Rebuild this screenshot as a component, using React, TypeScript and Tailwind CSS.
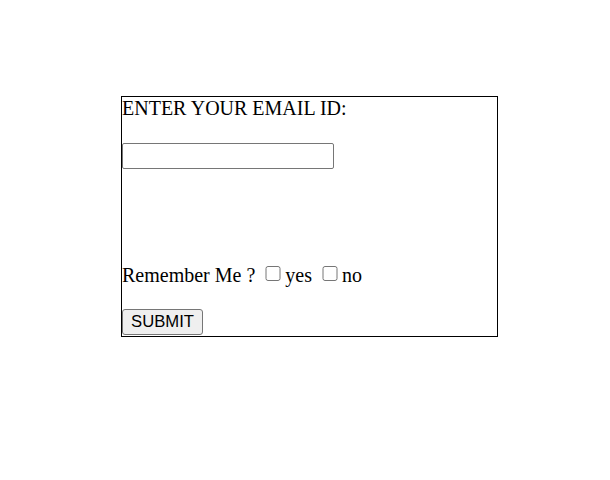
import React from "react";

export default function App() {
  return (
    <div className="w-[610px] h-[480px] bg-white pt-[96px] pl-[121px]">
      <div className="w-[377px] h-[241px] border border-black flex flex-col items-start font-['Liberation_Serif',serif] text-[20px] text-black">
        <div className="h-[22px] leading-[22px] whitespace-nowrap">ENTER YOUR EMAIL ID:</div>
        <input
          type="text"
          className="mt-[24px] w-[212px] h-[26px] border border-[#767676] rounded-[2px] bg-white px-[2px] text-[16px] outline-none"
        />
        <div className="mt-[95px] h-[22px] leading-[22px] flex items-start whitespace-nowrap">
          <span>Remember Me ?</span>
          <input type="checkbox" className="ml-[10px] mr-[4px] mt-[2px] w-[16px] h-[15px]" />
          <span>yes</span>
          <input type="checkbox" className="ml-[10px] mr-[4px] mt-[2px] w-[16px] h-[15px]" />
          <span>no</span>
        </div>
        <button
          type="button"
          className="mt-[23px] w-[81px] h-[26px] border border-[#767676] rounded-[3px] bg-[#efefef] text-[16.67px] leading-none text-black font-['Liberation_Sans',Arial,sans-serif] flex items-center justify-center"
        >
          SUBMIT
        </button>
      </div>
    </div>
  );
}
